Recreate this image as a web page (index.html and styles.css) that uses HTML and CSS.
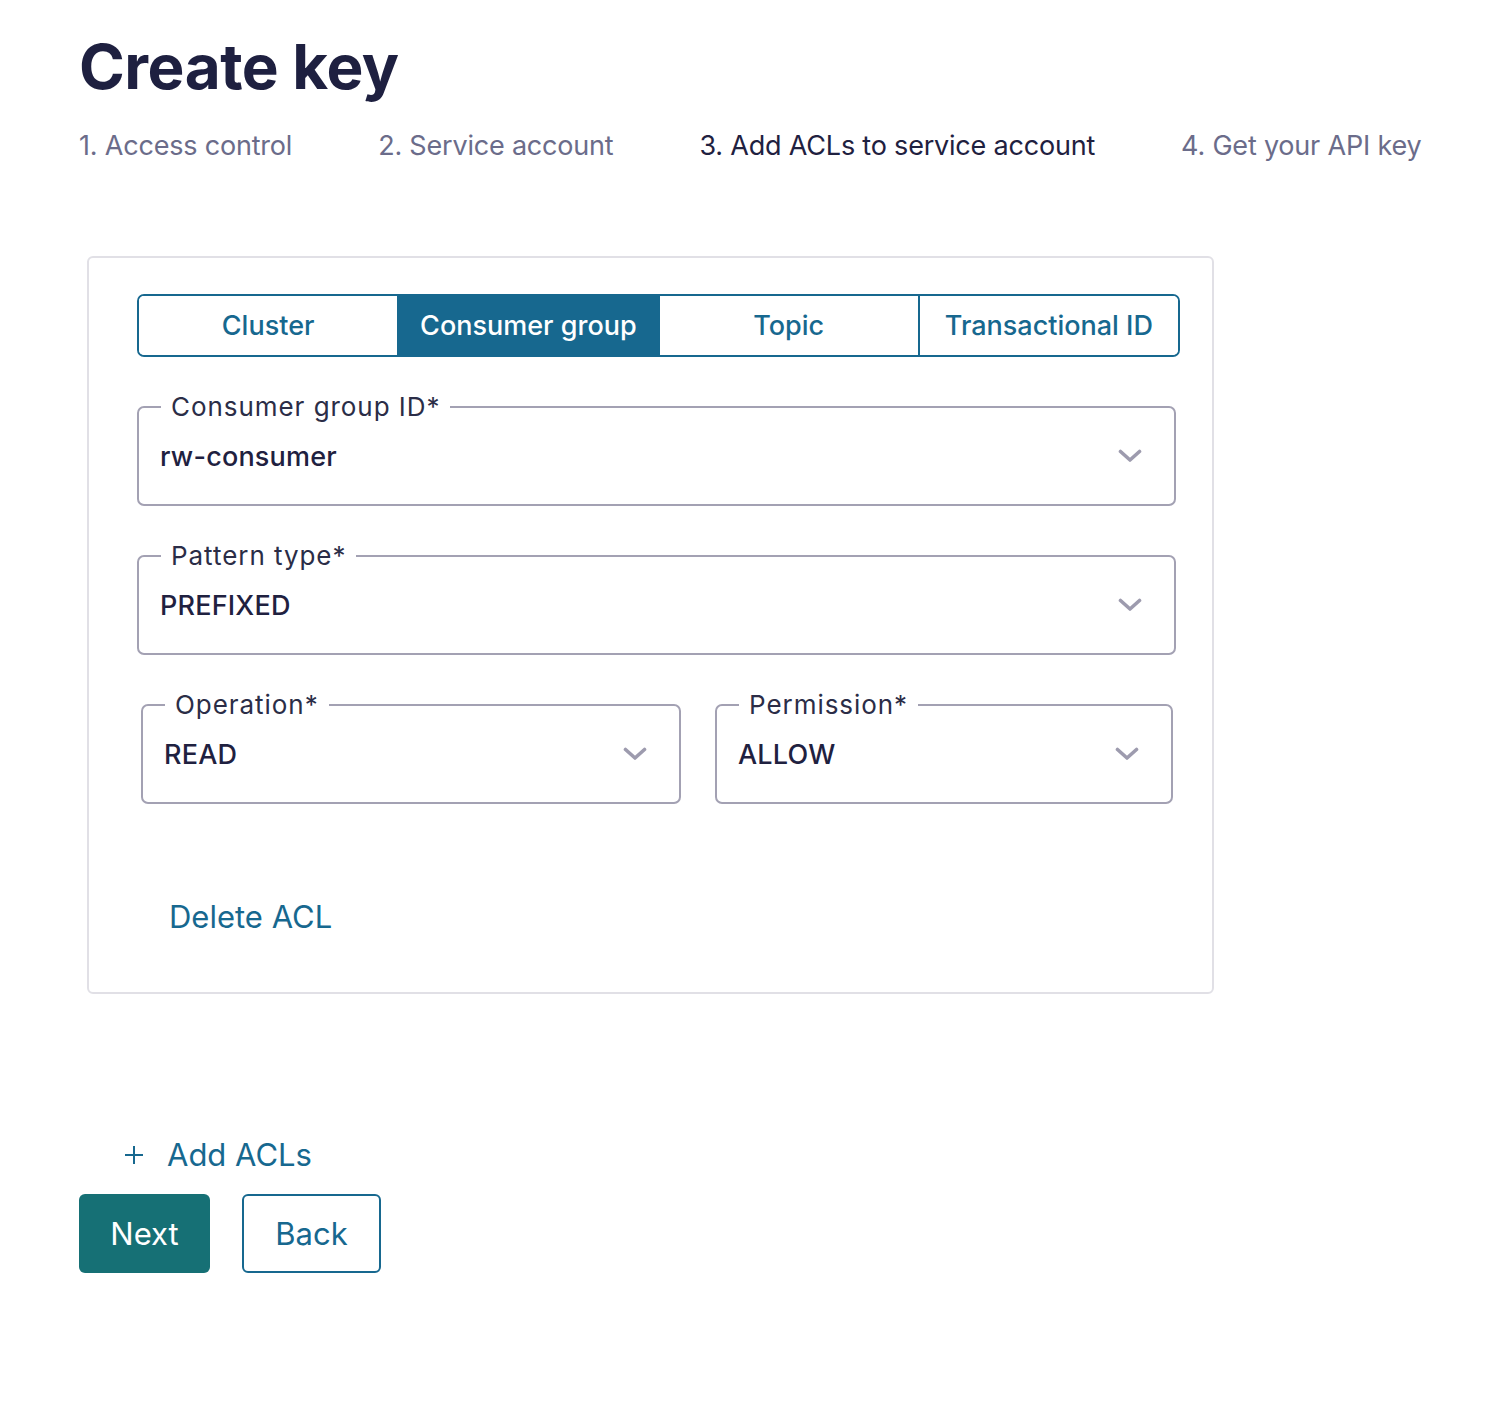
FILE: index.html
```html
<!DOCTYPE html>
<html lang="en">
<head>
<meta charset="utf-8">
<title>Create key</title>
<link rel="stylesheet" href="styles.css">
</head>
<body>
<main class="page">
  <h1 class="title">Create key</h1>
  <ol class="steps">
    <li class="step">1. Access control</li>
    <li class="step">2. Service account</li>
    <li class="step step-active">3. Add ACLs to service account</li>
    <li class="step">4. Get your API key</li>
  </ol>

  <section class="card">
    <div class="tabs">
      <button class="tab">Cluster</button>
      <button class="tab tab-active">Consumer group</button>
      <button class="tab">Topic</button>
      <button class="tab">Transactional ID</button>
    </div>

    <fieldset class="field field-full">
      <legend class="field-label">Consumer group ID*</legend>
      <div class="field-row">
        <span class="field-value">rw-consumer</span>
        <svg class="chevron" viewBox="0 0 24 14" width="24" height="14"><path d="M2.5 2.5 L12 11 L21.5 2.5" fill="none" stroke="#9d9bae" stroke-width="3.6" stroke-linecap="round" stroke-linejoin="round"/></svg>
      </div>
    </fieldset>

    <fieldset class="field field-full">
      <legend class="field-label">Pattern type*</legend>
      <div class="field-row">
        <span class="field-value">PREFIXED</span>
        <svg class="chevron" viewBox="0 0 24 14" width="24" height="14"><path d="M2.5 2.5 L12 11 L21.5 2.5" fill="none" stroke="#9d9bae" stroke-width="3.6" stroke-linecap="round" stroke-linejoin="round"/></svg>
      </div>
    </fieldset>

    <div class="field-pair">
      <fieldset class="field field-op">
        <legend class="field-label">Operation*</legend>
        <div class="field-row">
          <span class="field-value">READ</span>
          <svg class="chevron" viewBox="0 0 24 14" width="24" height="14"><path d="M2.5 2.5 L12 11 L21.5 2.5" fill="none" stroke="#9d9bae" stroke-width="3.6" stroke-linecap="round" stroke-linejoin="round"/></svg>
        </div>
      </fieldset>
      <fieldset class="field field-perm">
        <legend class="field-label">Permission*</legend>
        <div class="field-row">
          <span class="field-value">ALLOW</span>
          <svg class="chevron" viewBox="0 0 24 14" width="24" height="14"><path d="M2.5 2.5 L12 11 L21.5 2.5" fill="none" stroke="#9d9bae" stroke-width="3.6" stroke-linecap="round" stroke-linejoin="round"/></svg>
        </div>
      </fieldset>
    </div>

    <button class="link delete-link">Delete ACL</button>
  </section>

  <button class="link add-link"><svg class="plus" viewBox="0 0 18 18" width="18" height="18"><path d="M9 0 V18 M0 9 H18" stroke="#17688f" stroke-width="2" fill="none"/></svg>Add ACLs</button>

  <div class="actions">
    <button class="btn btn-primary">Next</button>
    <button class="btn btn-secondary">Back</button>
  </div>
</main>
</body>
</html>
```

FILE: styles.css
```css
* { box-sizing: border-box; }

html, body {
  margin: 0;
  padding: 0;
  background: #ffffff;
}

body {
  font-family: Inter, "Noto Sans", "Liberation Sans", sans-serif;
  color: #1f2041;
}

.page {
  padding: 28px 0 0 79px;
}

.title {
  margin: 0;
  font-size: 62px;
  line-height: 78px;
  font-weight: 700;
  color: #1e2040;
  letter-spacing: -0.5px;
}

.steps {
  list-style: none;
  margin: 23px 0 0;
  padding: 0;
  display: flex;
  gap: 86px;
}

.step {
  font-size: 27px;
  line-height: 34px;
  color: #6b6c8a;
  font-weight: 400;
  letter-spacing: -0.2px;
}

.step-active {
  color: #1f2140;
}

.card {
  margin: 93px 0 0 8px;
  width: 1127px;
  border: 2px solid #e1e0e6;
  border-radius: 6px;
  padding: 36px 32px 0 48px;
  height: 738px;
}

.tabs {
  display: flex;
  width: 1043px;
  height: 63px;
  border: 2px solid #17688f;
  border-radius: 7px;
  overflow: hidden;
}

.tab {
  flex: 1;
  border: 0;
  border-left: 2px solid #17688f;
  background: #ffffff;
  color: #17688f;
  font-family: inherit;
  font-size: 27px;
  font-weight: 500;
  padding: 0;
  cursor: pointer;
}

.tab:first-child { border-left: 0; }

.tab-active {
  background: #17688f;
  color: #ffffff;
}

.field {
  margin: 34px 0 0;
  padding: 0 20px 0 22px;
  border: 2px solid #a3a1b3;
  border-radius: 7px;
  min-width: 0;
}

.field-full {
  width: 1039px;
}

.field-label {
  padding: 0 10px;
  font-size: 26px;
  line-height: 31px;
  font-weight: 400;
  color: #2b2d47;
  letter-spacing: 0.95px;
}

.field-row {
  display: flex;
  align-items: center;
  justify-content: space-between;
  height: 68px;
  margin-bottom: 14px;
}

.field-value {
  font-size: 27px;
  font-weight: 500;
  color: #1f2140;
  margin-left: -1px;
  letter-spacing: 0.2px;
}

.chevron {
  display: block;
  margin-right: 12px;
}

.field-pair {
  display: flex;
  gap: 34px;
  margin-left: 4px;
}

.field-op { width: 540px; }
.field-perm { width: 458px; }

.link {
  border: 0;
  background: none;
  padding: 0;
  font-family: inherit;
  color: #17688f;
  cursor: pointer;
  font-weight: 400;
}

.delete-link {
  display: block;
  margin: 94px 0 0 32px;
  font-size: 31px;
  line-height: 38px;
}

.add-link {
  display: flex;
  align-items: center;
  margin: 142px 0 0 46px;
  font-size: 31px;
  line-height: 38px;
}

.plus {
  display: block;
  margin-right: 24px;
}

.actions {
  display: flex;
  gap: 32px;
  margin-top: 20px;
}

.btn {
  height: 79px;
  border-radius: 6px;
  font-family: inherit;
  font-size: 31px;
  font-weight: 400;
  cursor: pointer;
}

.btn-primary {
  width: 131px;
  background: #167075;
  border: 0;
  color: #ffffff;
}

.btn-secondary {
  width: 139px;
  background: #ffffff;
  border: 2px solid #17688f;
  color: #17688f;
}
```
